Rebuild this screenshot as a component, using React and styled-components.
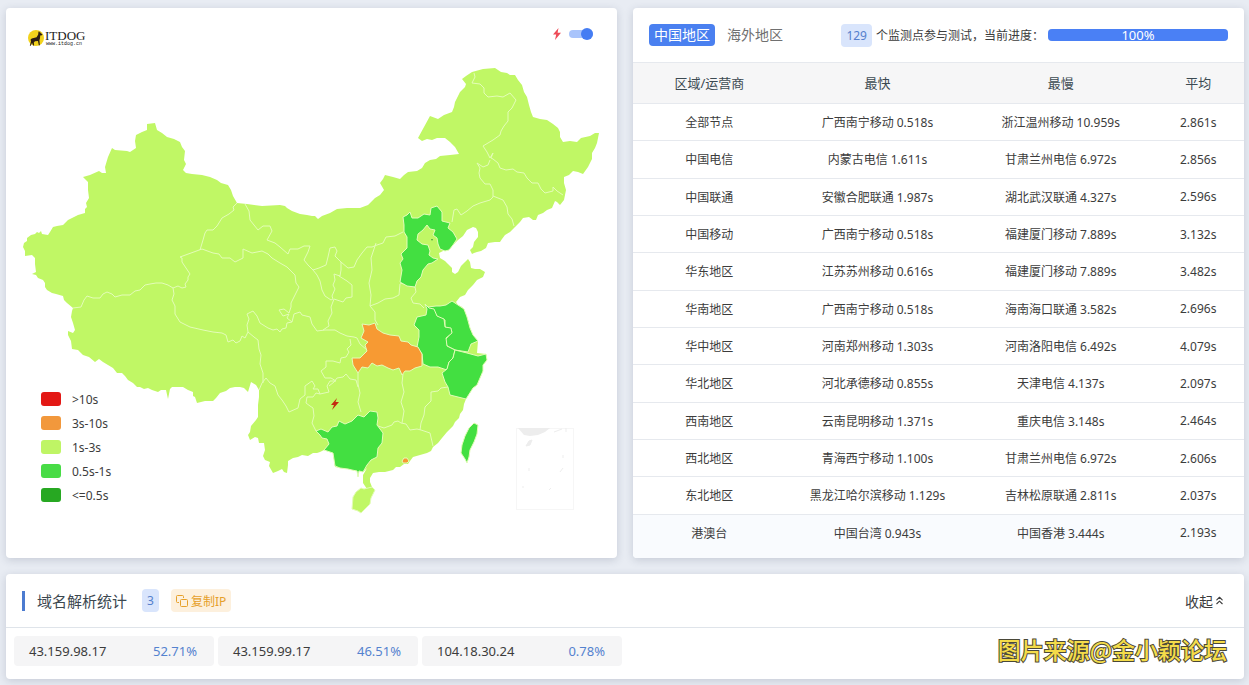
import React, { Component } from "react";
import styled, { createGlobalStyle } from "styled-components";
import { ChevronsUp } from "lucide-react";

const GlobalStyle = createGlobalStyle`
  * {
    box-sizing: border-box;
  }
  body {
    margin: 0;
    background-color: #e8ecf3;
    color: #3c3c3c;
    font-family: "Noto Sans", "Noto Sans CJK SC", sans-serif;
    font-size: 12px;
  }
`
const PageContainer = styled.div`
  display: flex;
  flex-direction: column;
  gap: 16px;
  padding: 8px 5px 6px 6px;
`
const TopContainer = styled.div`
  display: grid;
  grid-template-columns: minmax(0, 1fr) minmax(0, 1fr);
  gap: 16px;
`
const Panel = styled.section`
  position: relative;
  display: flex;
  flex-direction: column;
  background-color: #fff;
  border-radius: 4px;
  box-shadow: 0 2px 8px rgba(60, 72, 100, 0.2);
  overflow: hidden;
`

// map
const MapSvg = styled.svg`
  display: block;
  width: 100%;
  height: auto;
`
const MapBar = styled.div`
  position: absolute;
  top: 16px;
  left: 22px;
  right: 24px;
  display: flex;
  justify-content: space-between;
`
const LogoLink = styled.a`
  display: flex;
  align-items: center;
  height: 28px;
  color: #222;
  text-decoration: none;
`
const LogoText = styled.span`
  display: flex;
  flex-direction: column;
  font-family: "Liberation Serif", serif;
  font-size: 13px;
  line-height: 13px;
`
const LogoSite = styled.span`
  font-family: "Liberation Mono", monospace;
  font-size: 5px;
  line-height: 5px;
  padding-left: 1px;
`
const SwitchLabel = styled.label`
  display: flex;
  align-items: center;
  gap: 8px;
  height: 20px;
`
const Switch = styled.input`
  appearance: none;
  display: flex;
  align-items: center;
  justify-content: flex-end;
  width: 24px;
  height: 8px;
  margin: 0;
  border-radius: 4px;
  background-color: #a9c4fb;

  &::before {
    content: "";
    width: 12px;
    height: 12px;
    border-radius: 6px;
    background-color: #457df3;
  }
`
const Legend = styled.ul`
  position: absolute;
  left: 35px;
  bottom: 51px;
  margin: 0;
  padding: 0;
  list-style: none;
`
const LegendItem = styled.li`
  display: flex;
  align-items: center;
  gap: 11px;
  height: 24px;
`
const Swatch = styled.span`
  width: 20px;
  height: 14px;
  border-radius: 3px;
  background-color: ${props => props.$color};
`

// speed table
const TableBar = styled.div`
  display: flex;
  align-items: center;
  height: 54px;
  padding: 0 16px;
`
const Tab = styled.button`
  height: 22px;
  padding: 0 5px;
  margin-right: 7px;
  border: 0;
  border-radius: 4px;
  font-family: inherit;
  font-size: 14px;
  line-height: 22px;
  background-color: ${props => (props.$active ? "#4a80f0" : "transparent")};
  color: ${props => (props.$active ? "#fff" : "#707070")};
`
const Progress = styled.div`
  display: flex;
  align-items: center;
  gap: 4px;
  margin-left: auto;
  white-space: nowrap;
`
const Badge = styled.span`
  height: 23px;
  padding: 0 5px;
  border-radius: 4px;
  background-color: #d9e5fc;
  color: #5580cc;
  font-size: 12px;
  line-height: 23px;
`
const ProgressTrack = styled.div`
  width: 180px;
  height: 12px;
  border-radius: 4px;
  background-color: #e4e9f2;
`
const ProgressFill = styled.div`
  display: flex;
  align-items: center;
  justify-content: center;
  height: 12px;
  border-radius: 4px;
  background-color: #4a80f5;
  color: #fff;
  font-size: 13px;
  line-height: 18px;
`
const SpeedTable = styled.table`
  width: 100%;
  height: 490px;
  table-layout: fixed;
  border-collapse: separate;
  border-spacing: 0;
`
const HeadCell = styled.th`
  width: ${props => props.$width};
  height: 42px;
  padding: 0 0 2px;
  background-color: #f6f6f7;
  border-top: 1px solid #e6e9ee;
  border-bottom: 1px solid #e6e9ee;
  color: #3c4a52;
  font-size: 13px;
  font-weight: 400;
`
const Row = styled.tr`
  background-color: ${props => (props.$last ? "#f9fbfe" : "#fff")};
`
const Cell = styled.td`
  padding: 0;
  border-bottom: 1px solid ${props => (props.$last ? "transparent" : "#e6e9ee")};
  font-size: 12px;
  text-align: center;
`
const TableEnd = styled.div`
  flex: 1;
  background-color: #f9fbfe;
`

// resolved addresses
const StatBar = styled.div`
  display: flex;
  align-items: center;
  height: 54px;
  padding: 0 18px 0 16px;
  border-bottom: 1px solid #dfe4ea;
`
const StatTitle = styled.h2`
  margin: 0 15px 0 0;
  padding-left: 12px;
  border-left: 3px solid #4c7bd0;
  color: #3c4850;
  font-size: 15px;
  font-weight: 400;
  line-height: 20px;
`
const CopyButton = styled.button`
  display: flex;
  align-items: center;
  gap: 3px;
  height: 23px;
  margin-left: 12px;
  padding: 0 5px;
  border: 0;
  border-radius: 4px;
  background-color: #fdf0dd;
  color: #e6a02a;
  font-family: inherit;
  font-size: 12px;
`
const FoldButton = styled.button`
  display: flex;
  align-items: center;
  margin-left: auto;
  padding: 0;
  border: 0;
  background: none;
  color: #3c3c3c;
  font-family: inherit;
  font-size: 14px;
`
const IpContainer = styled.div`
  display: flex;
  gap: 4px;
  height: 51px;
  padding: 8px;
`
const IpItem = styled.div`
  display: flex;
  align-items: center;
  justify-content: space-between;
  width: 200px;
  height: 30px;
  padding: 0 17px 0 15px;
  border-radius: 4px;
  background-color: #f5f5f6;
  font-size: 13px;
`
const IpPercent = styled.span`
  color: #5482cf;
`
const Watermark = styled.div`
  position: absolute;
  right: 17px;
  bottom: 14px;
  color: #f4dc4a;
  font-family: "Noto Sans CJK SC", sans-serif;
  font-size: 23px;
  font-weight: 500;
  line-height: 32px;
  -webkit-text-stroke: 2px #4a4838;
  paint-order: stroke fill;
`

const colors = {
  slow: "#f79a33",
  mid: "#c0f765",
  fast: "#43df41"
}

const legend = [
  { color: "#e31815", text: ">10s" },
  { color: "#f2983c", text: "3s-10s" },
  { color: "#bff565", text: "1s-3s" },
  { color: "#48dc46", text: "0.5s-1s" },
  { color: "#27a822", text: "<=0.5s" }
]

const mainland =
  "23,247 24,243 27,241 27,238 31,235 35,234 37,232 39,233 41,231 42,234 48,235 50,232 53,227 57,226 63,225 68,220 78,215 85,213 85,209 87,207 86,203 89,198 88,190 88,182 83,177 90,175 99,171 102,173 106,173 105,167 108,157 112,148 115,150 127,151 130,152 133,150 136,148 135,141 136,135 142,132 147,130 147,124 155,123 157,130 162,133 167,137 174,139 180,142 182,147 185,151 184,160 186,164 183,170 186,173 192,174 202,175 210,177 217,180 221,183 228,185 231,190 233,196 237,203 247,204 262,206 280,205 285,206 287,208 292,211 300,214 307,215 312,216 315,216 318,219 322,216 330,213 337,209 347,208 360,208 368,205 375,198 380,195 384,190 380,183 383,179 385,175 393,177 400,179 404,175 408,172 417,171 422,168 425,163 430,160 436,159 440,156 450,155 459,154 455,147 450,142 445,138 437,138 432,140 427,139 422,141 418,138 424,127 430,116 438,119 444,115 452,112 454,107 455,102 460,92 465,87 466,84 462,79 466,76 472,72 483,69 495,68 501,72 507,73 510,75 515,75 518,80 522,85 524,92 527,97 529,105 531,112 533,117 540,119 547,120 553,124 558,128 560,132 560,137 563,142 570,141 577,142 581,138 590,136 595,133 599,133 597,143 595,148 592,153 592,159 588,167 583,174 578,172 573,171 569,175 564,177 564,183 566,190 564,200 560,205 557,202 555,201 552,208 547,210 543,213 538,215 536,220 533,220 529,217 523,218 520,222 515,227 510,232 505,235 502,239 500,242 495,242 488,243 486,248 481,251 477,252 474,253 472,254 470,250 473,247 474,242 478,237 478,232 476,228 473,227 467,230 463,236 458,240 453,245 449,250 443,251 439,253 440,258 445,261 448,264 452,268 452,272 455,274 458,272 461,266 465,262 468,259 470,262 471,268 475,269 480,269 485,272 483,277 477,280 473,285 468,290 465,295 460,297 456,302 458,305 462,307 465,313 468,320 470,328 473,337 478,341 477,353 486,354 487,360 483,365 483,371 480,378 477,385 473,388 466,399 464,404 463,410 460,414 459,418 455,422 453,426 447,432 442,438 438,443 433,447 431,451 427,453 420,455 413,457 410,461 408,464 404,464 400,467 396,467 393,470 385,472 379,472 373,473 370,478 370,482 372,487 367,489 363,483 363,475 367,468 363,472 358,471 348,469 335,467 333,453 324,450 320,452 317,453 313,453 308,456 302,455 298,457 293,458 288,461 288,465 287,473 284,472 282,469 278,471 273,473 269,466 270,462 265,460 263,456 265,450 264,443 259,443 258,438 255,437 250,440 248,435 250,432 251,426 256,420 258,417 258,405 259,397 259,390 256,385 251,382 248,392 244,388 240,387 235,387 230,388 226,391 220,393 216,398 213,401 205,401 197,403 195,397 193,396 193,392 188,390 183,387 177,387 172,387 170,389 168,399 166,390 161,390 158,392 152,390 148,388 144,389 140,387 137,387 133,383 128,380 125,376 122,373 117,373 113,368 108,365 103,362 99,359 95,362 89,357 83,355 78,350 72,349 71,341 68,335 68,331 73,333 75,330 73,323 71,317 72,311 73,308 67,303 64,300 63,296 56,294 52,293 47,290 45,287 45,283 43,280 38,278 36,275 32,274 36,272 35,264 35,258 32,255 25,256 25,251"

// province borders inside the mainland shape
const borders = [
  "73,308 81,307 84,300 87,296 93,298 100,298 103,294 107,292 112,294 115,297 122,295 130,295 135,291 140,290 145,285 150,284 156,283 162,283 168,285 173,288",
  "173,288 178,286 182,288 186,287 185,284 188,280 188,277 190,274 186,268 182,262 182,258 180,257 191,253 202,249",
  "200,250 203,240 205,233 207,230 213,230 217,226 222,218 229,214 234,210 233,207 237,203",
  "173,288 174,294 172,300 175,306 175,314 180,322 190,327 203,330 213,332 222,333 226,335 228,342 233,340 236,343 240,341 242,336 245,338 248,332",
  "248,332 247,325 249,319 247,314 253,311 257,316 260,323 268,328 273,330 277,329 280,332 282,329 286,328 287,323 292,322 287,318 289,314 283,316 279,310 284,309 289,313 291,307 291,303 295,295 299,287 296,283 295,275 287,267 280,263 272,258 268,254 262,251 252,253 243,249 243,258 235,262 230,258 222,258 219,254 213,253 202,249",
  "248,332 254,337 258,340 259,349 261,355 260,364 263,373 263,383",
  "259,390 262,383 266,378 270,383 275,386 278,395 282,400 286,406 289,412 298,408 300,399 305,395 305,386 312,381 315,386 313,389 318,389 320,394 329,392 327,386",
  "327,386 330,381 336,381 331,378 325,378 321,371 326,367 326,361 333,361 340,363 341,358 346,357 349,352 347,349 351,345 350,339",
  "292,322 294,314 300,312 302,315 310,317 312,324 317,331 325,330 335,330 340,333 347,336 354,337 357,338 360,344 367,350",
  "245,204 249,211 250,220 258,230 263,226 270,226 272,231 267,240 275,243 280,247 288,254 290,249 298,249 304,246 310,246 308,252 304,260 308,265 313,270",
  "313,270 319,268 326,265 328,257 330,248 335,247 337,251 335,256 341,262 341,270 340,276 334,274 335,280 333,285 335,289 332,296 333,299 331,300 325,296 322,290 320,281 317,275 313,270",
  "339,276 347,281 352,285 352,297 346,298 343,302 334,299 331,307 332,313 328,321 329,326 323,330",
  "341,262 348,268 354,267 357,260 362,253 367,247 372,247 377,245 383,243 386,237 395,236 403,232",
  "376,243 371,258 372,270 369,283 371,295 370,306 375,312 375,320 378,325",
  "370,306 378,303 385,299 393,298 399,295 400,284",
  "400,283 415,287 416,292 411,298 413,303 420,304 424,308",
  "358,373 358,384 360,393 358,402 361,412",
  "320,394 316,393 313,397 307,397 306,403 310,406 313,408 314,416 312,423 316,431",
  "329,386 334,382 337,378 343,377 346,374 350,379 356,380 358,387",
  "403,374 402,383 404,392 401,402 404,411 402,423",
  "378,426 384,428 392,425 394,422 398,421 401,423 406,424 410,430 417,429 421,430 430,433 433,446",
  "448,387 441,388 438,391 431,392 431,401 425,407 424,415 421,423 420,430",
  "474,73 475,77 472,83 480,84 484,88 484,93 488,97 497,96 503,97 510,93 516,100 512,108 508,112 508,121 504,126 501,131 500,135 493,140 483,146 487,152 490,158 493,153 491,158 493,159",
  "493,159 498,163 500,168 506,170 513,169 517,172 524,173 527,178 532,183 538,183 541,189 545,193 553,191 553,187 557,191 563,195",
  "490,160 488,165 483,167 477,163 480,168 479,173 480,178 485,184 490,184 493,190 493,197 490,200 480,203 473,206 467,211 461,215 457,209 454,210 452,222",
  "493,196 498,198 503,200 507,207 508,214 512,219 514,226"
]

const provinces = [
  {
    name: "河北",
    color: colors.fast,
    points:
      "403,217 407,215 410,212 412,218 418,218 424,214 430,215 431,208 437,206 442,212 442,221 450,223 448,228 453,232 457,239 453,245 449,250 445,251 440,249 438,244 437,238 433,235 435,230 430,229 427,225 423,230 418,234 417,240 422,244 428,245 430,251 429,255 433,258 438,259 432,263 428,264 423,270 421,277 417,281 415,287 407,286 400,282 402,270 400,263 403,259 401,254 407,248 407,237 404,232 404,225"
  },
  {
    name: "江苏",
    color: colors.fast,
    points:
      "428,307 436,306 440,306 446,305 452,301 458,305 464,309 467,317 470,328 473,335 478,341 471,344 468,352 455,350 447,346 445,340 452,332 450,329 445,327 445,320 438,317"
  },
  {
    name: "安徽",
    color: colors.fast,
    points:
      "425,304 429,308 434,309 437,316 444,319 445,327 451,328 452,333 446,338 447,346 455,350 453,358 449,362 447,370 438,367 430,367 423,364 422,354 417,347 419,337 419,330 414,325 417,317 426,315 427,309"
  },
  {
    name: "浙江",
    color: colors.fast,
    points:
      "455,350 467,353 478,356 486,354 487,360 483,365 483,371 480,378 477,385 473,388 466,399 458,397 450,395 448,387 445,382 442,373 447,369 449,362 453,358"
  },
  {
    name: "湖北",
    color: colors.slow,
    points:
      "362,324 369,325 375,323 377,329 383,333 390,335 399,336 401,341 408,342 411,345 418,347 422,354 422,366 415,368 410,371 405,371 402,375 399,368 393,370 388,368 382,365 377,366 372,363 368,368 362,367 358,373 353,365 352,358 360,358 367,351 365,345 368,342 361,338 364,331"
  },
  {
    name: "广西",
    color: colors.fast,
    points:
      "316,431 321,429 328,432 332,427 337,426 339,421 345,424 352,421 358,415 364,417 370,411 377,412 378,418 377,425 383,433 382,443 378,448 377,457 371,460 367,465 363,472 359,471 358,477 357,471 352,470 348,469 340,468 335,466 333,453 324,450 329,444 327,439 322,438 320,435"
  },
  {
    name: "台湾",
    color: colors.fast,
    points:
      "474,423 478,425 477,434 474,442 470,450 469,457 467,463 465,459 461,453 462,445 465,436 469,428"
  },
  {
    name: "海南",
    color: colors.mid,
    points:
      "375,490 372,487 364,489 361,488 356,492 353,497 352,509 358,511 361,513 366,508 370,504 371,498"
  },
  {
    name: "香港",
    color: colors.slow,
    points: "402,461 404,458 407,458 409,461 407,463 403,463"
  }
]

const rows = [
  ["全部节点", "广西南宁移动 0.518s", "浙江温州移动 10.959s", "2.861s"],
  ["中国电信", "内蒙古电信 1.611s", "甘肃兰州电信 6.972s", "2.856s"],
  ["中国联通", "安徽合肥联通 1.987s", "湖北武汉联通 4.327s", "2.596s"],
  ["中国移动", "广西南宁移动 0.518s", "福建厦门移动 7.889s", "3.132s"],
  ["华东地区", "江苏苏州移动 0.616s", "福建厦门移动 7.889s", "3.482s"],
  ["华南地区", "广西南宁移动 0.518s", "海南海口联通 3.582s", "2.696s"],
  ["华中地区", "河南郑州移动 1.303s", "河南洛阳电信 6.492s", "4.079s"],
  ["华北地区", "河北承德移动 0.855s", "天津电信 4.137s", "2.097s"],
  ["西南地区", "云南昆明移动 1.371s", "重庆电信 3.148s", "2.464s"],
  ["西北地区", "青海西宁移动 1.100s", "甘肃兰州电信 6.972s", "2.606s"],
  ["东北地区", "黑龙江哈尔滨移动 1.129s", "吉林松原联通 2.811s", "2.037s"],
  ["港澳台", "中国台湾 0.943s", "中国香港 3.444s", "2.193s"]
]

const ips = [
  { ip: "43.159.98.17", percent: "52.71%" },
  { ip: "43.159.99.17", percent: "46.51%" },
  { ip: "104.18.30.24", percent: "0.78%" }
]

const LogoIcon = () => (
  <svg width="17" height="18" viewBox="0 0 17 18" aria-hidden="true">
    <circle cx="8" cy="9" r="8" fill="#f2d21c" />
    <path
      d="M10.5 2.2 11.4 3.6 12 2.1 12.4 4 14.4 5.3 14 6.2 12.2 6.4 12 9.2 11.4 11.5 11.9 16.3H10.8L10 12 7 12.2 5.8 13.6 6.2 16.6H5.2L4 13.8 2.8 16.8H1.8L3 12.5 2.6 10.6 3.8 9.4 8.6 8.2 10.2 5.5Z"
      fill="#2b1d12"
    />
  </svg>
)

const BoltIcon = () => (
  <svg width="8" height="12" viewBox="0 0 8 12" aria-hidden="true">
    <path d="M5.5 0 0 6.6H3.2L2 12 8 4.8H4.6Z" fill="#ee4c58" />
  </svg>
)

const CopyIcon = () => (
  <svg width="12" height="12" viewBox="0 0 12 12" fill="none" stroke="#e6a02a" aria-hidden="true">
    <path d="M3 7.5H1.5a1 1 0 0 1-1-1v-5a1 1 0 0 1 1-1h5a1 1 0 0 1 1 1V3" />
    <rect x="4.5" y="4.5" width="7" height="7" rx="1" />
  </svg>
)

const ChinaMap = () => (
  <MapSvg viewBox="6 8 611 550" role="img" aria-label="中国地区">
    <polygon points={mainland} fill={colors.mid} />
    <g fill="none" stroke="#e3fcb8" strokeWidth="1" strokeLinejoin="round">
      {borders.map(points => (
        <polyline key={points} points={points} />
      ))}
    </g>
    {provinces.map(province => (
      <polygon
        key={province.name}
        points={province.points}
        fill={province.color}
        stroke="#e3fcb8"
        strokeWidth="1"
        strokeLinejoin="round"
      />
    ))}
    <path d="M431 239l2 0-1 2z" fill="#43a03c" />
    <path d="M337 398 331 405H334L332 410 339 402H335.500Z" fill="#c32a10" />
    {/* south sea inset */}
    <rect x="516.500" y="428.500" width="57" height="81" fill="none" stroke="#f6f6f6" />
    <path d="M518 428H550L545 432 538 435 530 436 524 435Z" fill="#ededed" />
    <path
      d="M526 446l3-5 3-1-2 5zM566 428v4M563 455v3M563 468l-3 4M529 468v3M523 486v2M549 490l2-2M554 432l8-3"
      fill="#ededed"
      stroke="#ededed"
    />
  </MapSvg>
)

class App extends Component {
  render() {
    const progress = 100;
    return (
      <PageContainer>
        <GlobalStyle />
        <TopContainer>
          <Panel>
            <ChinaMap />
            <MapBar>
              <LogoLink href="#">
                <LogoIcon />
                <LogoText>
                  ITDOG
                  <LogoSite>www.itdog.cn</LogoSite>
                </LogoText>
              </LogoLink>
              <SwitchLabel>
                <BoltIcon />
                <Switch type="checkbox" defaultChecked aria-label="闪电" />
              </SwitchLabel>
            </MapBar>
            <Legend>
              {legend.map(item => (
                <LegendItem key={item.text}>
                  <Swatch $color={item.color} />
                  {item.text}
                </LegendItem>
              ))}
            </Legend>
          </Panel>
          <Panel>
            <TableBar>
              <Tab $active>中国地区</Tab>
              <Tab>海外地区</Tab>
              <Progress>
                <Badge>129</Badge>
                <span>个监测点参与测试，当前进度：</span>
                <ProgressTrack>
                  <ProgressFill style={{ width: `${progress}%` }}>{progress}%</ProgressFill>
                </ProgressTrack>
              </Progress>
            </TableBar>
            <SpeedTable>
              <thead>
                <tr>
                  <HeadCell $width="25%">区域/运营商</HeadCell>
                  <HeadCell $width="30%">最快</HeadCell>
                  <HeadCell $width="30%">最慢</HeadCell>
                  <HeadCell $width="15%">平均</HeadCell>
                </tr>
              </thead>
              <tbody>
                {rows.map((row, i) => (
                  <Row key={row[0]} $last={i === rows.length - 1}>
                    {row.map((text, j) => (
                      <Cell key={j} $last={i === rows.length - 1}>{text}</Cell>
                    ))}
                  </Row>
                ))}
              </tbody>
            </SpeedTable>
            <TableEnd />
          </Panel>
        </TopContainer>
        <Panel>
          <StatBar>
            <StatTitle>域名解析统计</StatTitle>
            <Badge>3</Badge>
            <CopyButton>
              <CopyIcon />
              复制IP
            </CopyButton>
            <FoldButton>
              收起
              <ChevronsUp size={13} strokeWidth={2} />
            </FoldButton>
          </StatBar>
          <IpContainer>
            {ips.map(item => (
              <IpItem key={item.ip}>
                <span>{item.ip}</span>
                <IpPercent>{item.percent}</IpPercent>
              </IpItem>
            ))}
          </IpContainer>
          <Watermark>图片来源@金小颖论坛</Watermark>
        </Panel>
      </PageContainer>
    );
  }
}

export default App;
